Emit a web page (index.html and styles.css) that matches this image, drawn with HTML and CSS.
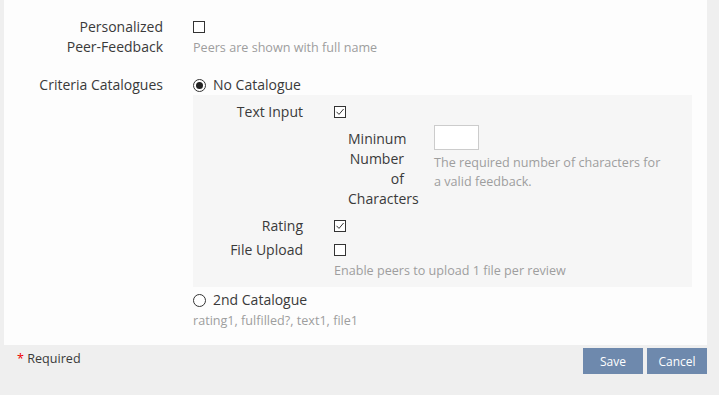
FILE: index.html
```html
<!DOCTYPE html>
<html lang="en">
<head>
    <meta charset="UTF-8">
    <title>Peer Feedback Settings</title>
    <link rel="stylesheet" href="styles.css">
</head>
<body>

    <div class="panel">
        <div class="row">
            <div class="row-label">Personalized<br>Peer-Feedback</div>
            <div class="row-control">
                <div class="line"><span class="check"></span></div>
                <div class="hint">Peers are shown with full name</div>
            </div>
        </div>

        <div class="row">
            <div class="row-label">Criteria Catalogues</div>
            <div class="row-control">
                <div class="line"><span class="radio checked"></span><span class="option">No Catalogue</span></div>

                <div class="sub-box">
                    <div class="sub-row first">
                        <div class="sub-label">Text Input</div>
                        <div class="sub-control">
                            <div class="line"><span class="check"><svg viewBox="0 0 12 12" width="12" height="12"><polyline points="2.5,5.8 5,8.4 9.6,3" /></svg></span></div>
                        </div>
                    </div>

                    <div class="min-row">
                        <div class="min-label">Mininum Number of Characters</div>
                        <div class="min-control">
                            <input type="text" class="min-input">
                            <div class="hint wrap">The required number of characters for a valid feedback.</div>
                        </div>
                    </div>

                    <div class="sub-row rating">
                        <div class="sub-label">Rating</div>
                        <div class="sub-control">
                            <div class="line"><span class="check"><svg viewBox="0 0 12 12" width="12" height="12"><polyline points="2.5,5.8 5,8.4 9.6,3" /></svg></span></div>
                        </div>
                    </div>

                    <div class="sub-row">
                        <div class="sub-label">File Upload</div>
                        <div class="sub-control">
                            <div class="line"><span class="check"></span></div>
                            <div class="hint">Enable peers to upload 1 file per review</div>
                        </div>
                    </div>
                </div>

                <div class="line second"><span class="radio"></span><span class="option">2nd Catalogue</span></div>
                <div class="hint">rating1, fulfilled?, text1, file1</div>
            </div>
        </div>
    </div>

    <div class="footer">
        <div class="required"><span class="star">*</span> Required</div>
        <div class="buttons">
            <button class="btn">Save</button>
            <button class="btn">Cancel</button>
        </div>
    </div>

</body>
</html>
```

FILE: styles.css
```css
body {
    margin: 0;
    background-color: #efefef;
    font-family: "Open Sans", Arial, sans-serif;
    font-size: 14px;
    line-height: 20px;
    color: #3a3a3a;
}
.panel {
    width: 703px;
    margin-left: 4px;
    padding: 17px 0 14px;
    box-sizing: border-box;
    background: #fdfdfd;
}
.row {
    display: flex;
    gap: 30px;
}
.row + .row {
    margin-top: 17px;
}
.row-label {
    width: 159px;
    flex: none;
    text-align: right;
}
.row-control {
    flex: 1;
}
.line {
    display: flex;
    align-items: center;
    height: 20px;
}
.hint {
    color: #9e9e9e;
    font-size: 12.6px;
    padding-top: 1px;
}
.check {
    display: inline-block;
    width: 12px;
    height: 12px;
    box-sizing: border-box;
    border: 1px solid #333;
    background: #fff;
    position: relative;
}
.check svg {
    position: absolute;
    left: -1px;
    top: -1px;
    fill: none;
    stroke: #333;
    stroke-width: 1;
}
.radio {
    display: inline-block;
    width: 13px;
    height: 13px;
    box-sizing: border-box;
    border: 1px solid #333;
    border-radius: 50%;
    background: #fff;
    position: relative;
}
.radio.checked::after {
    content: "";
    position: absolute;
    left: 2px;
    top: 2px;
    width: 7px;
    height: 7px;
    border-radius: 50%;
    background: #222;
}
.option {
    margin-left: 7px;
}
.sub-box {
    width: 499px;
    padding: 7px 0 6px;
    box-sizing: border-box;
    background: #f6f6f6;
}
.sub-row {
    display: flex;
    gap: 31px;
}
.sub-label {
    width: 110px;
    flex: none;
    text-align: right;
}
.sub-row.first {
    margin-bottom: 3px;
}
.sub-row.rating {
    margin-bottom: 4px;
}
.min-row {
    display: flex;
    gap: 30px;
    padding-left: 155px;
    margin-bottom: 7px;
}
.min-label {
    width: 56px;
    flex: none;
    text-align: right;
    padding-top: 4px;
}
.min-input {
    display: block;
    width: 45px;
    height: 25px;
    box-sizing: border-box;
    margin: 0;
    border: 1px solid #ccc;
    background: #fff;
}
.hint.wrap {
    width: 232px;
    margin-top: 3px;
    padding-top: 0;
    line-height: 19px;
}
.line.second {
    margin-top: 3px;
}
.footer {
    width: 703px;
    margin-left: 4px;
    padding: 4px 0 0 13px;
    box-sizing: border-box;
    display: flex;
    justify-content: space-between;
    align-items: flex-start;
}
.required {
    font-size: 12.6px;
}
.star {
    color: #e00;
}
.buttons {
    display: flex;
    gap: 4px;
    margin-top: -1px;
}
.btn {
    width: 60px;
    height: 26px;
    border: none;
    border-radius: 0;
    background-color: #6e89ad;
    color: #fff;
    font-family: "Open Sans", Arial, sans-serif;
    font-size: 12px;
    cursor: pointer;
}
```
